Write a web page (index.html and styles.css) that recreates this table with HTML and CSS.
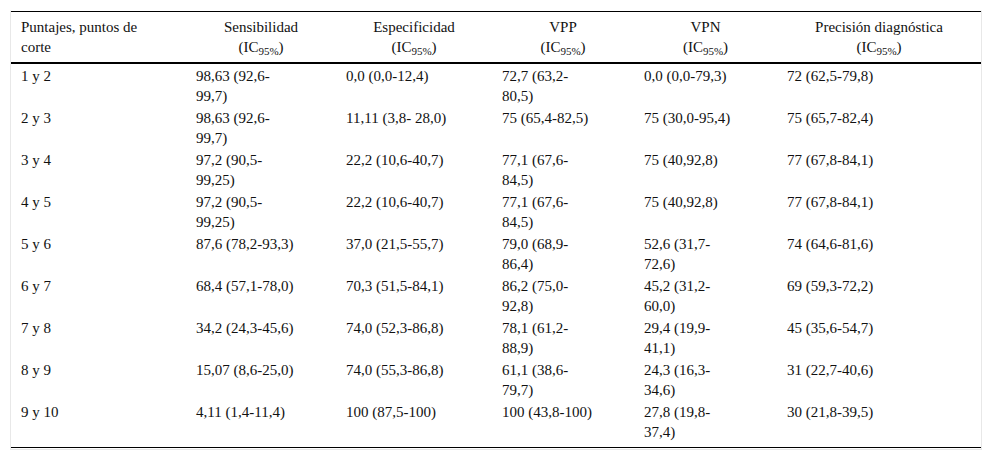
FILE: index.html
```html
<!DOCTYPE html>
<html lang="es">
<head>
<meta charset="utf-8">
<title>Tabla</title>
<link rel="stylesheet" href="styles.css">
</head>
<body>
<div class="frame">
<table class="data">
<colgroup>
<col class="c1"><col class="c2"><col class="c3"><col class="c4"><col class="c5"><col class="c6">
</colgroup>
<thead>
<tr>
<th class="first">Puntajes, puntos de<br>corte</th>
<th>Sensibilidad<br>(IC<sub>95%</sub>)</th>
<th>Especificidad<br>(IC<sub>95%</sub>)</th>
<th>VPP<br>(IC<sub>95%</sub>)</th>
<th>VPN<br>(IC<sub>95%</sub>)</th>
<th>Precisión diagnóstica<br>(IC<sub>95%</sub>)</th>
</tr>
</thead>
<tbody>
<tr><td>1 y 2</td><td>98,63 (92,6-<br>99,7)</td><td>0,0 (0,0-12,4)</td><td>72,7 (63,2-<br>80,5)</td><td>0,0 (0,0-79,3)</td><td>72 (62,5-79,8)</td></tr>
<tr><td>2 y 3</td><td>98,63 (92,6-<br>99,7)</td><td>11,11 (3,8- 28,0)</td><td>75 (65,4-82,5)</td><td>75 (30,0-95,4)</td><td>75 (65,7-82,4)</td></tr>
<tr><td>3 y 4</td><td>97,2 (90,5-<br>99,25)</td><td>22,2 (10,6-40,7)</td><td>77,1 (67,6-<br>84,5)</td><td>75 (40,92,8)</td><td>77 (67,8-84,1)</td></tr>
<tr><td>4 y 5</td><td>97,2 (90,5-<br>99,25)</td><td>22,2 (10,6-40,7)</td><td>77,1 (67,6-<br>84,5)</td><td>75 (40,92,8)</td><td>77 (67,8-84,1)</td></tr>
<tr><td>5 y 6</td><td>87,6 (78,2-93,3)</td><td>37,0 (21,5-55,7)</td><td>79,0 (68,9-<br>86,4)</td><td>52,6 (31,7-<br>72,6)</td><td>74 (64,6-81,6)</td></tr>
<tr><td>6 y 7</td><td>68,4 (57,1-78,0)</td><td>70,3 (51,5-84,1)</td><td>86,2 (75,0-<br>92,8)</td><td>45,2 (31,2-<br>60,0)</td><td>69 (59,3-72,2)</td></tr>
<tr><td>7 y 8</td><td>34,2 (24,3-45,6)</td><td>74,0 (52,3-86,8)</td><td>78,1 (61,2-<br>88,9)</td><td>29,4 (19,9-<br>41,1)</td><td>45 (35,6-54,7)</td></tr>
<tr><td>8 y 9</td><td>15,07 (8,6-25,0)</td><td>74,0 (55,3-86,8)</td><td>61,1 (38,6-<br>79,7)</td><td>24,3 (16,3-<br>34,6)</td><td>31 (22,7-40,6)</td></tr>
<tr class="last"><td>9 y 10</td><td>4,11 (1,4-11,4)</td><td>100 (87,5-100)</td><td>100 (43,8-100)</td><td>27,8 (19,8-<br>37,4)</td><td>30 (21,8-39,5)</td></tr>
</tbody>
</table>
</div>
</body>
</html>
```
FILE: styles.css
```css
html, body {
  margin: 0;
  padding: 0;
  background: #ffffff;
}
body {
  padding: 10px;
  font-family: "Liberation Serif", "Times New Roman", serif;
  font-size: 15px;
  line-height: 20px;
  color: #111111;
}
.frame {
  width: 970px;
  border: 1px solid #e8e8e8;
  border-top-color: #ffffff;
  padding-bottom: 1px;
}
.data {
  width: 970px;
  border-collapse: collapse;
  table-layout: fixed;
}
.c1 { width: 175px; }
.c2 { width: 150px; }
.c3 { width: 156px; }
.c4 { width: 142px; }
.c5 { width: 143px; }
.c6 { width: 204px; }
.data thead tr {
  border-top: 1px solid #000000;
  border-bottom: 2px solid #000000;
}
.data th {
  font-weight: normal;
  text-align: center;
  vertical-align: top;
  white-space: nowrap;
  padding: 5px 10px 5px 10px;
}
.data th.first {
  text-align: left;
}
.data td {
  vertical-align: top;
  text-align: left;
  white-space: nowrap;
  padding: 2px 10px 0 10px;
}
.data tr.last td {
  padding-bottom: 5px;
}
.data tbody tr.last {
  border-bottom: 1px solid #000000;
}
sub {
  font-size: 11px;
  line-height: 0;
  vertical-align: -3px;
}
```
